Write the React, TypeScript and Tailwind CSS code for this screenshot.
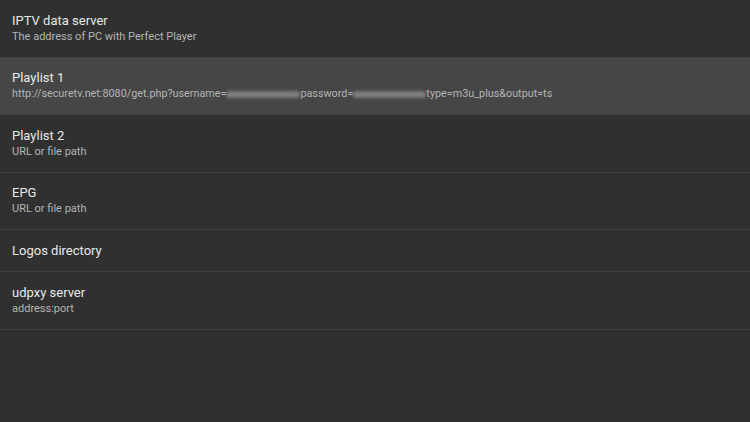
const items = [
  { title: "IPTV data server", sub: "The address of PC with Perfect Player" },
  { title: "Playlist 1", sub: "url", active: true },
  { title: "Playlist 2", sub: "URL or file path" },
  { title: "EPG", sub: "URL or file path" },
  { title: "Logos directory" },
  { title: "udpxy server", sub: "address:port" },
];

function Smudge({ w }: { w: string }) {
  return (
    <span className={`inline-block ${w} h-[7px] align-middle rounded-full bg-[#8a8a8a] blur-[1.5px] opacity-80`} />
  );
}

export default function App() {
  return (
    <div
      className="w-[750px] h-[422px] bg-[#303030] overflow-hidden"
      style={{ fontFamily: "Roboto, 'Noto Sans', sans-serif" }}
    >
      {items.map((item) => (
        <div
          key={item.title}
          className={`flex flex-col justify-center px-3 border-b border-[#404040] ${
            item.sub ? "h-[57.5px]" : "h-[42px]"
          } ${item.active ? "bg-[#464646]" : ""}`}
        >
          <div className="text-[13px] leading-[16px] text-[#e8e8e8]">{item.title}</div>
          {item.sub && (
            <div className="text-[11px] leading-[15px] text-[#b4b4b4] whitespace-nowrap">
              {item.sub === "url" ? (
                <span className="text-[10.8px]">
                  http://securetv.net:8080/get.php?username=
                  <Smudge w="w-[74px]" />
                  password=
                  <Smudge w="w-[73px]" />
                  type=m3u_plus&amp;output=ts
                </span>
              ) : (
                item.sub
              )}
            </div>
          )}
        </div>
      ))}
    </div>
  );
}
